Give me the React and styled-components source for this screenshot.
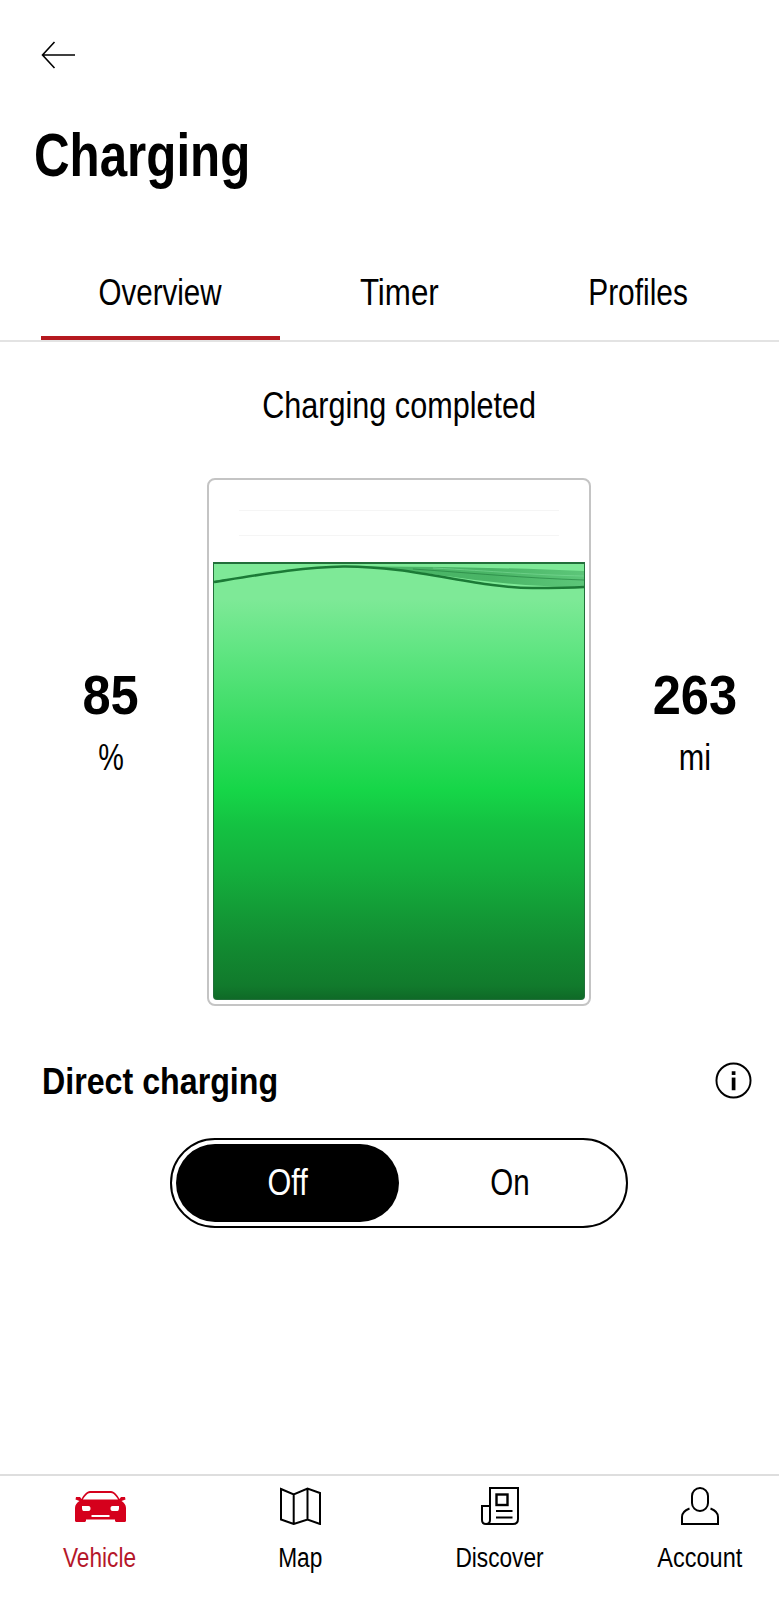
import React from "react";
import styled, { createGlobalStyle } from "styled-components";

const Global = createGlobalStyle`
  html, body { margin: 0; padding: 0; background: #fff; }
  body { font-family: "Liberation Sans", Arial, sans-serif; color: #000; }
  * { box-sizing: border-box; }
`;

const Narrow = styled.span`
  display: inline-block;
  white-space: nowrap;
  transform: scaleX(${(p) => p.$x});
  transform-origin: ${(p) => p.$origin || "center"};
`;
const Page = styled.div`
  width: 779px;
  height: 1600px;
  display: flex;
  flex-direction: column;
  overflow: hidden;
  background: #fff;
`;
const Main = styled.main`
  flex: 1;
  display: flex;
  flex-direction: column;
`;
const BackRow = styled.div`
  height: 28px;
  margin-top: 41px;
  padding-left: 41px;
  display: flex;
  align-items: center;
`;
const Title = styled.h1`
  margin: 48px 0 0 34px;
  font-size: 62px;
  line-height: 76px;
  font-weight: 700;
`;
const Tabs = styled.nav`
  display: grid;
  grid-template-columns: repeat(3, 239px);
  padding-left: 41px;
  margin-top: 73px;
  height: 76px;
  border-bottom: 2px solid #e3e3e3;
`;
const Tab = styled.div`
  display: flex;
  align-items: center;
  justify-content: center;
  height: 74px;
  padding-bottom: 20px;
  font-size: 36px;
  box-shadow: ${(p) => (p.$active ? "inset 0 -4px 0 #b5191f" : "none")};
`;
const Status = styled.div`
  text-align: center;
  font-size: 36px;
  line-height: 40px;
  margin-top: 44px;
  padding-left: 19px;
`;
const BatteryRow = styled.section`
  display: grid;
  grid-template-columns: 207px 384px 188px;
  margin-top: 52px;
`;
const Stat = styled.div`
  display: flex;
  flex-direction: column;
  align-items: center;
  padding-top: 187px;
  padding-left: ${(p) => p.$pl}px;
`;
const StatValue = styled.div`
  font-size: 55px;
  line-height: 60px;
  font-weight: 700;
`;
const StatUnit = styled.div`
  font-size: 36px;
  line-height: 40px;
  margin-top: 13px;
`;
const Battery = styled.div`
  height: 528px;
  border: 2px solid #c4c4c4;
  border-radius: 8px;
  padding: 0 4px 4px;
  display: flex;
  flex-direction: column;
`;
const GridLine = styled.div`
  height: 1px;
  background: #f5f5f5;
  margin: ${(p) => p.$top}px 26px 0 26px;
`;
const Tank = styled.div`
  position: relative;
  margin-top: 26px;
  flex: 1;
  border: 1px solid #226f3a;
  border-top-width: 2px;
  border-radius: 0 0 4px 4px;
  overflow: hidden;
  background: linear-gradient(
    180deg,
    #7ee997 0%,
    #7ee997 8%,
    #60e582 20%,
    #3ddd66 35%,
    #16d648 52%,
    #14c242 60%,
    #14b03d 70%,
    #128a31 88%,
    #117a2c 97%,
    #0f6a27 100%
  );
`;
const Wave = styled.svg`
  position: absolute;
  left: 0;
  top: 0;
  width: 100%;
  height: 30px;
`;
const DirectRow = styled.div`
  display: flex;
  align-items: center;
  justify-content: space-between;
  padding: 0 27px 0 42px;
  margin-top: 52px;
  height: 48px;
`;
const DirectTitle = styled.h2`
  margin: 0;
  font-size: 37px;
  font-weight: 700;
`;
const InfoSvg = styled.svg`
  margin-bottom: 4px;
`;
const Toggle = styled.div`
  align-self: flex-start;
  margin: 32px 0 0 170px;
  width: 458px;
  height: 90px;
  border: 2px solid #000;
  border-radius: 45px;
  padding: 4px;
  display: grid;
  grid-template-columns: 223px 1fr;
`;
const ToggleOption = styled.div`
  display: flex;
  align-items: center;
  justify-content: center;
  font-size: 36px;
  border-radius: 40px;
  color: ${(p) => (p.$on ? "#fff" : "#000")};
  background: ${(p) => (p.$on ? "#000" : "transparent")};
`;
const BottomNav = styled.nav`
  height: 126px;
  border-top: 2px solid #dedede;
  display: grid;
  grid-template-columns: repeat(4, 200px);
`;
const NavItem = styled.div`
  display: flex;
  flex-direction: column;
  align-items: center;
  padding-top: 10px;
  color: ${(p) => (p.$active ? "#b5172a" : "#000")};
`;
const NavIcon = styled.div`
  width: 56px;
  height: 40px;
  display: flex;
  align-items: center;
  justify-content: center;
`;
const NavLabel = styled.div`
  font-size: 27px;
  line-height: 32px;
  margin-top: 16px;
`;

const BackIcon = () => (
  <svg width="34" height="28" viewBox="0 0 34 28" fill="none" stroke="#000" strokeWidth="1.6">
    <path d="M34 14H2M13.500 1 1.500 14 13.500 27" />
  </svg>
);
const InfoIcon = () => (
  <InfoSvg width="37" height="37" viewBox="0 0 38 38" fill="none">
    <circle cx="19" cy="19" r="17.500" stroke="#000" strokeWidth="2" />
    <rect x="17.200" y="16" width="3.800" height="13" fill="#000" />
    <rect x="17.200" y="9.500" width="3.800" height="3.800" fill="#000" />
  </InfoSvg>
);
const CarIcon = () => (
  <svg width="51" height="31" viewBox="0 0 51 31" fill="#d5001c">
    <path
      fillRule="evenodd"
      d="M15 0H36C39 0 42.500 4 44.500 8L46 6H50L50.500 8.500L46.500 10C49 11.500 51 14 51 17V29.500C51 30.300 50.500 31 49.500 31H41.500C40.700 31 40 30.300 40 29.500V28.500H11V29.500C11 30.300 10.300 31 9.500 31H1.500C.5 31 0 30.300 0 29.500V17C0 14 2 11.500 4.500 10L.5 8.500L1 6H5L6.500 8C8.500 4 12 0 15 0ZM15 2C12.500 2 9.500 5.500 8 8.500H43C41.500 5.500 38.500 2 36 2ZM7 15H13.500C15 15 15.500 16 15.500 17.500C15.500 19 15 20 13.500 20H8.500C7.500 20 7 18.500 7 17ZM44 15H37.500C36 15 35.500 16 35.500 17.500C35.500 19 36 20 37.500 20H42.500C43.500 20 44 18.500 44 17ZM16.500 24V26H34.500V24Z"
    />
  </svg>
);
const MapIcon = () => (
  <svg width="41" height="38" viewBox="0 0 41 38" fill="none" stroke="#000" strokeWidth="2">
    <path d="M1 2 13.700 7.500 27.500 1.500 40 6V37L27.500 32.500 13.700 37 1 32.500ZM13.700 7.500V37M27.500 1.500V32.500" />
  </svg>
);
const NewsIcon = () => (
  <svg width="38" height="38" viewBox="0 0 38 38" fill="none" stroke="#000" strokeWidth="2">
    <path d="M5 37H32C35 37 37 35 37 32V1H9V33C9 35.500 7.500 37 5 37S1 35.500 1 33V19H9" />
    <rect x="15.500" y="7.500" width="11" height="10.500" strokeWidth="2.400" />
    <path d="M15 24H31.500M15 30.500H31.500" strokeWidth="2.200" />
  </svg>
);
const UserIcon = () => (
  <svg width="38" height="38" viewBox="0 0 38 38" fill="none" stroke="#000" strokeWidth="2">
    <rect x="11" y="1" width="16" height="23" rx="8" />
    <path d="M8.500 21.500C4.500 23 1 26 1 30V37H37V30C37 26 33.500 23 29.500 21.500" />
  </svg>
);

const tabs = [
  { t: "Overview", x: 0.82 },
  { t: "Timer", x: 0.87 },
  { t: "Profiles", x: 0.83 },
];
const nav = [
  { label: "Vehicle", Icon: CarIcon, x: 0.84, active: true },
  { label: "Map", Icon: MapIcon, x: 0.84 },
  { label: "Discover", Icon: NewsIcon, x: 0.84 },
  { label: "Account", Icon: UserIcon, x: 0.87 },
];

export default function App() {
  return (
    <Page>
      <Global />
      <Main>
        <BackRow>
          <BackIcon />
        </BackRow>
        <Title><Narrow $x={0.795} $origin="left">Charging</Narrow></Title>
        <Tabs>
          {tabs.map(({ t, x }, i) => (
            <Tab key={t} $active={i === 0}><Narrow $x={x}>{t}</Narrow></Tab>
          ))}
        </Tabs>
        <Status><Narrow $x={0.85}>Charging completed</Narrow></Status>
        <BatteryRow>
          <Stat $pl={15}>
            <StatValue><Narrow $x={0.92}>85</Narrow></StatValue>
            <StatUnit><Narrow $x={0.8}>%</Narrow></StatUnit>
          </Stat>
          <Battery>
            <GridLine $top={30} />
            <GridLine $top={24} />
            <Tank>
              <Wave viewBox="0 0 372 30" preserveAspectRatio="none">
                <defs>
                  <linearGradient id="band" x1="0" x2="1" y1="0" y2="0">
                    <stop offset="0" stopColor="#1f8a3e" stopOpacity="0.55" />
                    <stop offset="0.6" stopColor="#1f8a3e" stopOpacity="0.55" />
                    <stop offset="1" stopColor="#3aa35a" stopOpacity="0.5" />
                  </linearGradient>
                </defs>
                <path d="M140 2.500C200 2.500 265 23 372 23V7C300 4 220 2 140 2.500Z" fill="url(#band)" />
                <path d="M200 5C260 9 310 14 372 16" fill="none" stroke="#1f7a3a" strokeOpacity="0.6" strokeWidth="1" />
                <path d="M220 4C280 7 320 11 372 12" fill="none" stroke="#7edc98" strokeOpacity="0.6" strokeWidth="1" />
                <path d="M0 18C50 10 90 3 130 2.500C200 2 265 24 320 24C340 24 355 24 372 23" fill="none" stroke="#1b7a36" strokeWidth="2.600" />
              </Wave>
            </Tank>
          </Battery>
          <Stat $pl={20}>
            <StatValue><Narrow $x={0.92}>263</Narrow></StatValue>
            <StatUnit><Narrow $x={0.85}>mi</Narrow></StatUnit>
          </Stat>
        </BatteryRow>
        <DirectRow>
          <DirectTitle><Narrow $x={0.87} $origin="left">Direct charging</Narrow></DirectTitle>
          <InfoIcon />
        </DirectRow>
        <Toggle>
          <ToggleOption $on><Narrow $x={0.85}>Off</Narrow></ToggleOption>
          <ToggleOption><Narrow $x={0.82}>On</Narrow></ToggleOption>
        </Toggle>
      </Main>
      <BottomNav>
        {nav.map(({ label, Icon, x, active }) => (
          <NavItem key={label} $active={active}>
            <NavIcon><Icon /></NavIcon>
            <NavLabel><Narrow $x={x}>{label}</Narrow></NavLabel>
          </NavItem>
        ))}
      </BottomNav>
    </Page>
  );
}
